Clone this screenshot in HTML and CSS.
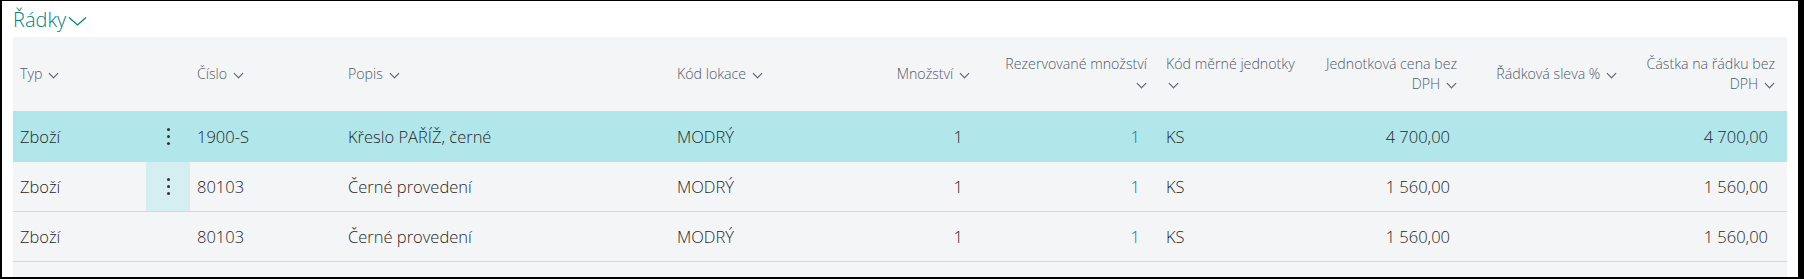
FILE: index.html
```html
<!DOCTYPE html>
<html>
<head>
    <title>Řádky</title>
    <meta charset="utf-8">
    <link rel="stylesheet" href="styles.css">
</head>
<body>
    <div class="page">
        <div class="part-title">
            Řádky
            <svg class="title-chevron" width="19" height="10" viewBox="0 0 19 10"><path d="M1 1.5 L9.5 9 L18 1.5" fill="none" stroke="#00807c" stroke-width="1.2"/></svg>
        </div>

        <div class="lines">
            <div class="row head">
                <div class="cell">Typ <i class="chev"></i></div>
                <div class="cell"></div>
                <div class="cell">Číslo <i class="chev"></i></div>
                <div class="cell">Popis <i class="chev"></i></div>
                <div class="cell">Kód lokace <i class="chev"></i></div>
                <div class="cell num">Množství <i class="chev"></i></div>
                <div class="cell num">Rezervované množství<br><i class="chev"></i></div>
                <div class="cell unit">Kód měrné jednotky<br><i class="chev"></i></div>
                <div class="cell num">Jednotková cena bez<br>DPH <i class="chev"></i></div>
                <div class="cell num">Řádková sleva % <i class="chev"></i></div>
                <div class="cell num">Částka na řádku bez<br>DPH <i class="chev"></i></div>
                <div class="cell"></div>
            </div>

            <div class="row selected">
                <div class="cell">Zboží</div>
                <div class="cell dots"><span class="ellipsis"></span></div>
                <div class="cell">1900-S</div>
                <div class="cell">Křeslo PAŘÍŽ, černé</div>
                <div class="cell">MODRÝ</div>
                <div class="cell num">1</div>
                <div class="cell num link">1</div>
                <div class="cell unit">KS</div>
                <div class="cell num">4 700,00</div>
                <div class="cell num"></div>
                <div class="cell num">4 700,00</div>
                <div class="cell"></div>
            </div>

            <div class="row">
                <div class="cell">Zboží</div>
                <div class="cell dots hover"><span class="ellipsis"></span></div>
                <div class="cell">80103</div>
                <div class="cell">Černé provedení</div>
                <div class="cell">MODRÝ</div>
                <div class="cell num">1</div>
                <div class="cell num link">1</div>
                <div class="cell unit">KS</div>
                <div class="cell num">1 560,00</div>
                <div class="cell num"></div>
                <div class="cell num">1 560,00</div>
                <div class="cell"></div>
            </div>

            <div class="row">
                <div class="cell">Zboží</div>
                <div class="cell dots"></div>
                <div class="cell">80103</div>
                <div class="cell">Černé provedení</div>
                <div class="cell">MODRÝ</div>
                <div class="cell num">1</div>
                <div class="cell num link">1</div>
                <div class="cell unit">KS</div>
                <div class="cell num">1 560,00</div>
                <div class="cell num"></div>
                <div class="cell num">1 560,00</div>
                <div class="cell"></div>
            </div>
        </div>
    </div>
</body>
</html>
```

FILE: styles.css
```css
* {
    box-sizing: border-box;
    margin: 0;
    padding: 0;
}

body {
    background: #fff;
    font-family: "Open Sans", "Noto Sans", sans-serif;
    font-weight: 300;
    color: #262626;
}

.page {
    height: 279px;
    border: 2px solid #000;
    border-top-width: 1px;
    border-right-width: 6px;
    padding: 6px 11px 0 11px;
    overflow: hidden;
}

.part-title {
    color: #00807c;
    font-size: 20px;
    line-height: 26px;
    height: 26px;
    margin-bottom: 4px;
    display: flex;
    align-items: center;
    gap: 2px;
}

.title-chevron {
    margin-top: 1px;
}

.lines {
    background: #f4f5f7;
    height: 240px;
}

.row {
    display: grid;
    grid-template-columns: 133px 44px 151px 329px 170px 137px 177px 161px 149px 160px 158px 5px;
    height: 50px;
    border-bottom: 1px solid #d6d6d6;
    font-size: 16.5px;
}

.row.head {
    height: 75px;
    font-size: 14.2px;
    color: #505a69;
    line-height: 20px;
}

.row.selected {
    background: #b1e6ea;
}

.cell {
    padding: 0 7px;
    display: flex;
    align-items: center;
    white-space: nowrap;
}

.head .cell {
    display: block;
    align-self: center;
}

.cell.num {
    justify-content: flex-end;
    text-align: right;
    padding-right: 14px;
}

.head .cell.num {
    padding-right: 7px;
}

.cell.unit {
    padding-left: 12px;
}

.cell.link {
    color: #00807c;
}

.chev {
    display: inline-block;
    width: 7px;
    height: 7px;
    border-right: 1.2px solid #505a69;
    border-bottom: 1.2px solid #505a69;
    transform: rotate(45deg);
    margin: 0 2px 4px 4px;
    vertical-align: middle;
}

.cell.dots {
    justify-content: center;
    padding: 0;
}

.cell.dots.hover {
    background: #d5eef1;
}

.ellipsis {
    width: 3px;
    height: 3px;
    border-radius: 50%;
    background: #333;
    box-shadow: 0 -7px 0 #333, 0 7px 0 #333;
}
```
